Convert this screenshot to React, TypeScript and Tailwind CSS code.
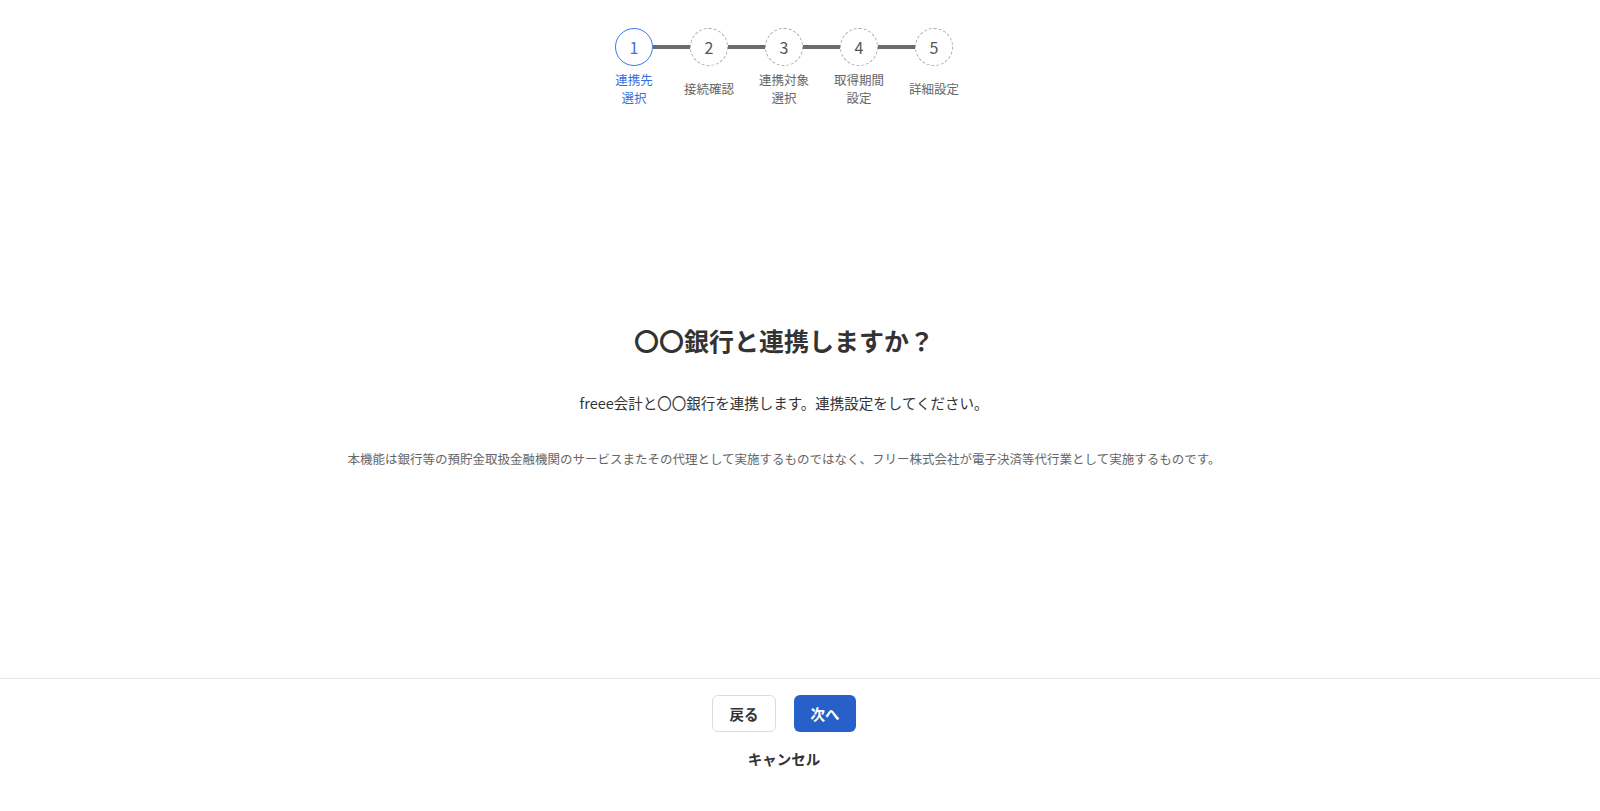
const steps = [
  { no: 1, label: ['連携先', '選択'] },
  { no: 2, label: ['接続確認'] },
  { no: 3, label: ['連携対象', '選択'] },
  { no: 4, label: ['取得期間', '設定'] },
  { no: 5, label: ['詳細設定'] },
];

const current = 1;

const Stepper = () => (
  <div className="flex justify-center">
    {steps.map((step, i) => {
      const active = step.no === current;
      return (
        <div key={step.no} className="flex w-[75px] flex-col items-center">
          <div className="flex w-full items-center">
            <div className={`h-[4px] flex-1 ${i === 0 ? '' : 'bg-[#6b6b6b]'}`} />
            <div
              className={`flex h-[38px] w-[38px] items-center justify-center rounded-full text-[16px] ${
                active
                  ? 'border-[1.5px] border-[#3b78f0] text-[#3b6fe0]'
                  : 'border border-dashed border-[#a8a8a8] text-[#555]'
              }`}
            >
              {step.no}
            </div>
            <div className={`h-[4px] flex-1 ${i === steps.length - 1 ? '' : 'bg-[#6b6b6b]'}`} />
          </div>
          <div
            className={`mt-[5px] flex min-h-[36px] flex-col items-center justify-center text-[12.5px] leading-[18px] ${
              active ? 'text-[#3670e0]' : 'text-[#666]'
            }`}
          >
            {step.label.map((line) => (
              <span key={line}>{line}</span>
            ))}
          </div>
        </div>
      );
    })}
  </div>
);

export default function App() {
  return (
    <div
      className="flex h-screen flex-col bg-white text-[#333]"
      style={{ fontFamily: '"Noto Sans CJK JP", "Noto Sans", sans-serif' }}
    >
      <div className="pr-8 pt-[28px]">
        <Stepper />
      </div>

      <main className="flex flex-1 flex-col items-center justify-center pr-8 pt-[6px]">
        <h1 className="text-[25px] font-bold leading-[36px] text-[#333]">〇〇銀行と連携しますか？</h1>
        <p className="mt-[34px] text-[14.5px] leading-[22px] text-[#333]">
          freee会計と〇〇銀行を連携します。連携設定をしてください。
        </p>
        <p className="mt-[35px] text-[12.5px] leading-[20px] text-[#666]">
          本機能は銀行等の預貯金取扱金融機関のサービスまたその代理として実施するものではなく、フリー株式会社が電子決済等代行業として実施するものです。
        </p>
      </main>

      <footer className="h-[133px] border-t border-[#e3e6e6]">
        <div className="flex flex-col items-center pr-8 pt-[16px]">
          <div className="flex gap-[18px]">
            <button className="h-[37px] w-[64px] rounded-[6px] border border-[#dcdcdc] bg-white text-[14.5px] font-bold text-[#333]">
              戻る
            </button>
            <button className="h-[37px] w-[62px] rounded-[6px] bg-[#2860c9] text-[14.5px] font-bold text-white">
              次へ
            </button>
          </div>
          <button className="mt-[17px] text-[14.5px] font-bold leading-[20px] text-[#333]">キャンセル</button>
        </div>
      </footer>
    </div>
  );
}
